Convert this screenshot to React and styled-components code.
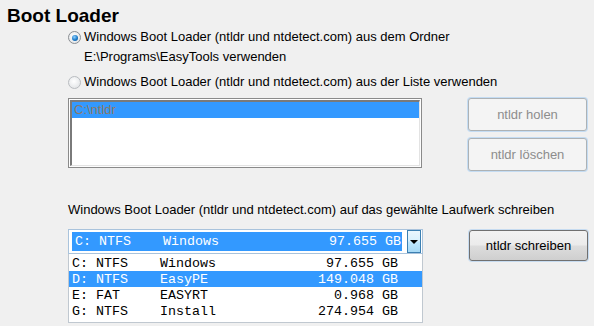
import React from "react";
import styled, { createGlobalStyle } from "styled-components";

const Global = createGlobalStyle`
  html, body {
    margin: 0;
    padding: 0;
    background: #f0f0f0;
    width: 594px;
    height: 326px;
    overflow: hidden;
  }
`;

const Page = styled.div`
  width: 594px;
  height: 326px;
  background: #f0f0f0;
  font-family: "Liberation Sans", Arial, sans-serif;
  font-size: 13px;
  color: #000;
  padding: 5px 0 0 7px;
  box-sizing: border-box;
`;

const Title = styled.h1`
  margin: 0;
  font-size: 19px;
  font-weight: bold;
  line-height: 22px;
`;

const Body = styled.div`
  margin-left: 61px;
  display: flex;
  flex-direction: column;
`;

const RadioRow = styled.label`
  display: flex;
  align-items: flex-start;
  gap: 3px;
  margin-top: ${(p) => p.$top}px;
  line-height: 20px;
`;

const RadioDot = styled.span`
  flex: none;
  width: 11px;
  height: 11px;
  margin-top: 4px;
  border-radius: 50%;
  border: 1px solid ${(p) => (p.$checked ? "#8a8e93" : "#b9bcc0")};
  background: radial-gradient(circle at 45% 40%, #ffffff 0%, #e6e8ea 70%, #d8dadd 100%);
  display: flex;
  align-items: center;
  justify-content: center;
  &::after {
    content: "";
    display: ${(p) => (p.$checked ? "block" : "none")};
    width: 6px;
    height: 6px;
    border-radius: 50%;
    background: radial-gradient(circle at 40% 35%, #8fd0ff 0%, #1a7ac8 55%, #0a4f90 100%);
  }
`;

const RadioText = styled.span`
  display: block;
`;

const ListRow = styled.div`
  display: flex;
  margin-top: 6px;
  gap: 46px;
`;

const ListBox = styled.div`
  width: 354px;
  height: 70px;
  box-sizing: border-box;
  border: 1px solid #8a8a8a;
  padding: 1px;
  background: #fdfdfd;
`;

const ListInner = styled.div`
  height: 100%;
  box-sizing: border-box;
  border-top: 2px solid #7a7a7a;
  border-left: 2px solid #7a7a7a;
  border-right: 1px solid #e3e3e3;
  border-bottom: 1px solid #e3e3e3;
  background: #fff;
`;

const ListItem = styled.div`
  height: 16px;
  line-height: 16px;
  padding-left: 2px;
  background: #3399ff;
  color: #8c7a68;
`;

const ButtonCol = styled.div`
  display: flex;
  flex-direction: column;
  gap: 7px;
`;

const Button = styled.button`
  width: 119px;
  height: ${(p) => p.$h}px;
  margin-top: ${(p) => p.$top || 0}px;
  box-sizing: border-box;
  font-family: "Liberation Sans", Arial, sans-serif;
  font-size: 13px;
  padding: 0;
  border-radius: 3px;
  border: 1px solid ${(p) => (p.$disabled ? "#adb2b5" : "#707070")};
  box-shadow: 0 0 0 1px ${(p) => (p.$disabled ? "#c4dcf3" : "#c6dbf0")};
  color: ${(p) => (p.$disabled ? "#8d8d8d" : "#000")};
  background: ${(p) =>
    p.$disabled
      ? "#f4f4f4"
      : "linear-gradient(to bottom, #f2f2f2 0%, #ebebeb 48%, #dddddd 52%, #cfcfcf 100%)"};
  cursor: default;
`;

const Label = styled.div`
  margin-top: 30px;
  line-height: 17px;
`;

const ComboRow = styled.div`
  display: flex;
  align-items: flex-start;
  margin-top: 11px;
  gap: 46px;
`;

const ComboWrap = styled.div`
  width: 355px;
  display: flex;
  flex-direction: column;
`;

const Combo = styled.div`
  height: 25px;
  box-sizing: border-box;
  border: 1px solid #a9c3dc;
  background: #fff;
  display: flex;
  align-items: center;
  padding: 0 1px 0 3px;
  gap: 5px;
`;

const Mono = styled.div`
  font-family: "Liberation Mono", "Courier New", monospace;
  font-size: 13.33px;
  display: grid;
  grid-template-columns: 24px 64px 1fr auto;
  align-items: center;
`;

const ComboValue = styled(Mono)`
  flex: 1;
  height: 19px;
  background: #3399ff;
  color: #fff;
  padding: 0 1px 0 3px;
`;

const DropButton = styled.div`
  width: 14px;
  height: 23px;
  box-sizing: border-box;
  border: 1px solid #3c7fb1;
  background: linear-gradient(to bottom, #eaf6fd 0%, #d9f0fc 45%, #bee6fd 55%, #a7d9f5 100%);
  display: flex;
  align-items: center;
  justify-content: center;
`;

const Arrow = styled.span`
  width: 0;
  height: 0;
  border-left: 4px solid transparent;
  border-right: 4px solid transparent;
  border-top: 4px solid #000;
`;

const DropList = styled.div`
  height: 69px;
  box-sizing: border-box;
  border: 1px solid #c0c8d0;
  border-top: none;
  background: #fff;
  padding-top: 1px;
`;

const DropItem = styled(Mono)`
  height: 16px;
  padding: 0 24px 0 3px;
  background: ${(p) => (p.$active ? "#3399ff" : "transparent")};
  color: ${(p) => (p.$active ? "#fff" : "#000")};
`;

const Size = styled.span`
  text-align: right;
  white-space: pre;
`;

const drives = [
  { d: "C:", fs: "NTFS", name: "Windows", size: "97.655" },
  { d: "D:", fs: "NTFS", name: "EasyPE", size: "149.048" },
  { d: "E:", fs: "FAT", name: "EASYRT", size: "0.968" },
  { d: "G:", fs: "NTFS", name: "Install", size: "274.954" },
];

const DriveCells = ({ item }) => (
  <>
    <span>{item.d}</span>
    <span>{item.fs}</span>
    <span>{item.name}</span>
    <Size>{item.size + " GB"}</Size>
  </>
);

export default function App() {
  return (
    <Page>
      <Global />
      <Title>Boot Loader</Title>
      <Body>
        <RadioRow $top={0}>
          <RadioDot $checked />
          <RadioText>
            Windows Boot Loader (ntldr und ntdetect.com) aus dem Ordner
            <br />
            E:\Programs\EasyTools verwenden
          </RadioText>
        </RadioRow>
        <RadioRow $top={5}>
          <RadioDot />
          <RadioText>Windows Boot Loader (ntldr und ntdetect.com) aus der Liste verwenden</RadioText>
        </RadioRow>
        <ListRow>
          <ListBox>
            <ListInner>
              <ListItem>C:\ntldr</ListItem>
            </ListInner>
          </ListBox>
          <ButtonCol>
            <Button $disabled $h={33}>ntldr holen</Button>
            <Button $disabled $h={33}>ntldr löschen</Button>
          </ButtonCol>
        </ListRow>
        <Label>Windows Boot Loader (ntldr und ntdetect.com) auf das gewählte Laufwerk schreiben</Label>
        <ComboRow>
          <ComboWrap>
            <Combo>
              <ComboValue>
                <DriveCells item={drives[0]} />
              </ComboValue>
              <DropButton>
                <Arrow />
              </DropButton>
            </Combo>
            <DropList>
              {drives.map((item, i) => (
                <DropItem key={item.d} $active={i === 1}>
                  <DriveCells item={item} />
                </DropItem>
              ))}
            </DropList>
          </ComboWrap>
          <Button $h={31} $top={1}>ntldr schreiben</Button>
        </ComboRow>
      </Body>
    </Page>
  );
}
